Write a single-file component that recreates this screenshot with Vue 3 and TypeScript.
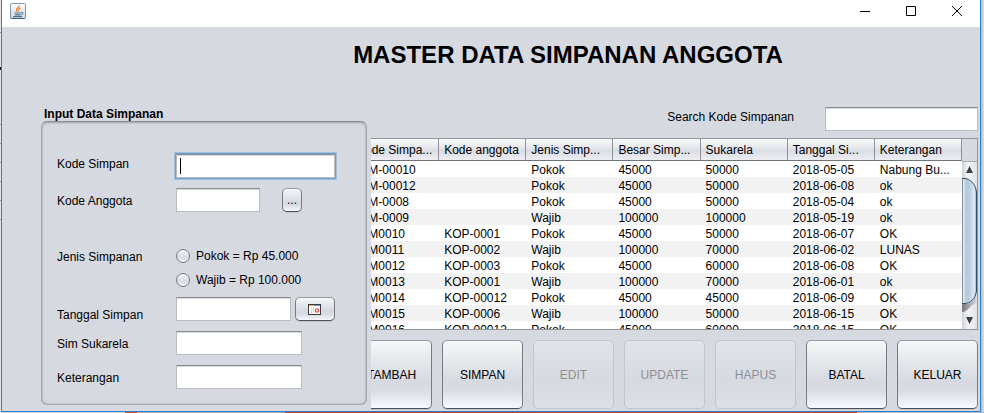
<script setup lang="ts">
import { ref } from 'vue'

interface Simpanan {
  kode: string
  anggota: string
  jenis: string
  besar: string
  sukarela: string
  tanggal: string
  keterangan: string
}

interface Action {
  label: string
  disabled: boolean
}

const columns: string[] = [
  'Kode Simpa...',
  'Kode anggota',
  'Jenis Simp...',
  'Besar Simp...',
  'Sukarela',
  'Tanggal Si...',
  'Keterangan',
]

const row = (
  kode: string,
  anggota: string,
  jenis: string,
  besar: string,
  sukarela: string,
  tanggal: string,
  keterangan: string,
): Simpanan => ({ kode, anggota, jenis, besar, sukarela, tanggal, keterangan })

const rows: Simpanan[] = [
  row('SIM-00010', '', 'Pokok', '45000', '50000', '2018-05-05', 'Nabung Bu...'),
  row('SIM-00012', '', 'Pokok', '45000', '50000', '2018-06-08', 'ok'),
  row('SIM-0008', '', 'Pokok', '45000', '50000', '2018-05-04', 'ok'),
  row('SIM-0009', '', 'Wajib', '100000', '100000', '2018-05-19', 'ok'),
  row('SIM0010', 'KOP-0001', 'Pokok', '45000', '50000', '2018-06-07', 'OK'),
  row('SIM0011', 'KOP-0002', 'Wajib', '100000', '70000', '2018-06-02', 'LUNAS'),
  row('SIM0012', 'KOP-0003', 'Pokok', '45000', '60000', '2018-06-08', 'OK'),
  row('SIM0013', 'KOP-0001', 'Wajib', '100000', '70000', '2018-06-01', 'ok'),
  row('SIM0014', 'KOP-00012', 'Pokok', '45000', '45000', '2018-06-09', 'OK'),
  row('SIM0015', 'KOP-0006', 'Wajib', '100000', '50000', '2018-06-15', 'OK'),
  row('SIM0016', 'KOP-00012', 'Pokok', '45000', '60000', '2018-06-15', 'OK'),
]

const actions: Action[] = [
  { label: 'TAMBAH', disabled: false },
  { label: 'SIMPAN', disabled: false },
  { label: 'EDIT', disabled: true },
  { label: 'UPDATE', disabled: true },
  { label: 'HAPUS', disabled: true },
  { label: 'BATAL', disabled: false },
  { label: 'KELUAR', disabled: false },
]

const kodeSimpan = ref('')
const kodeAnggota = ref('')
const jenis = ref('')
const tanggal = ref('')
const sukarela = ref('')
const keterangan = ref('')
const search = ref('')
</script>

<template>
  <div class="desktop">
    <div class="window">
      <header class="titlebar">
        <svg class="java" viewBox="0 0 16 16" aria-hidden="true">
          <defs>
            <linearGradient id="tile" x1="0" y1="0" x2="0" y2="1">
              <stop offset="0" stop-color="#fdfdfd" />
              <stop offset="1" stop-color="#cfd8e0" />
            </linearGradient>
          </defs>
          <rect x="0.5" y="0.5" width="15" height="15" rx="1" fill="url(#tile)" stroke="#7d93a6" />
          <path d="M1 15.5H15" stroke="#47647c" />
          <path d="M9.5 2.500C9.500 4.500 6 5 6.500 7C6.700 8 7.500 8.300 7.500 9M10.500 5C8.500 6 8.200 7 9 8" fill="none" stroke="#e8822a" stroke-width="1.300" />
          <path d="M4.500 10H11M5 11.800H10.500M3 13.600H12" fill="none" stroke="#4f7595" stroke-width="1.200" />
          <path d="M11 9.500C13.800 8.800 13.800 11.200 11 11.800" fill="none" stroke="#4f7595" />
        </svg>
        <div class="controls">
          <button type="button" aria-label="Minimize">
            <svg viewBox="0 0 10 10"><path d="M0 5.500H10" /></svg>
          </button>
          <button type="button" aria-label="Maximize">
            <svg viewBox="0 0 10 10"><path d="M0.500 0.500H9.500V9.500H0.500Z" /></svg>
          </button>
          <button type="button" aria-label="Close">
            <svg viewBox="0 0 10 10"><path d="M0 0L10 10M10 0L0 10" /></svg>
          </button>
        </div>
      </header>

      <h1>MASTER DATA SIMPANAN ANGGOTA</h1>

      <main class="content">
        <fieldset class="side">
          <legend>Input Data Simpanan</legend>
          <div class="panel">
            <div class="line top">
              <label for="kode-simpan">Kode Simpan</label>
              <div class="focus-box">
                <input id="kode-simpan" v-model="kodeSimpan" type="text" class="field" />
                <span class="caret"></span>
              </div>
            </div>
            <div class="line">
              <label for="kode-anggota">Kode Anggota</label>
              <div class="group wide">
                <input id="kode-anggota" v-model="kodeAnggota" type="text" class="field w-code" />
                <button type="button" class="btn dots">...</button>
              </div>
            </div>
            <div class="line radios" role="radiogroup" aria-labelledby="jenis-label">
              <span id="jenis-label">Jenis Simpanan</span>
              <div class="stack">
                <label><input v-model="jenis" type="radio" name="jenis" value="pokok" />Pokok = Rp 45.000</label>
                <label><input v-model="jenis" type="radio" name="jenis" value="wajib" />Wajib = Rp 100.000</label>
              </div>
            </div>
            <div class="line bottom">
              <label for="tanggal">Tanggal Simpan</label>
              <div class="group">
                <input id="tanggal" v-model="tanggal" type="text" class="field w-date" />
                <button type="button" class="btn calendar" aria-label="Tanggal">
                  <svg viewBox="0 0 14 11">
                    <rect x="0.500" y="0.500" width="12" height="10" fill="#fff" stroke="#3a3a3a" />
                    <path d="M1 1.500H6" stroke="#f0a848" />
                    <path d="M6 1.500H12" stroke="#7d9cc8" />
                    <path d="M3.500 3V10M5.500 3V10" stroke="#dcdcdc" />
                    <circle cx="9" cy="6.500" r="1.700" fill="#fff" stroke="#e05050" stroke-width="1.200" />
                  </svg>
                </button>
              </div>
            </div>
            <div class="line">
              <label for="sukarela">Sim Sukarela</label>
              <input id="sukarela" v-model="sukarela" type="text" class="field w-text" />
            </div>
            <div class="line">
              <label for="keterangan">Keterangan</label>
              <input id="keterangan" v-model="keterangan" type="text" class="field w-text" />
            </div>
          </div>
        </fieldset>

        <section class="data">
          <div class="search">
            <label for="search">Search Kode Simpanan</label>
            <input id="search" v-model="search" type="text" class="field" />
          </div>

          <div class="pane">
            <table>
              <thead>
                <tr>
                  <th v-for="c in columns" :key="c" scope="col">{{ c }}</th>
                </tr>
              </thead>
              <tbody>
                <tr v-for="r in rows" :key="r.kode">
                  <td>{{ r.kode }}</td>
                  <td>{{ r.anggota }}</td>
                  <td>{{ r.jenis }}</td>
                  <td>{{ r.besar }}</td>
                  <td>{{ r.sukarela }}</td>
                  <td>{{ r.tanggal }}</td>
                  <td>{{ r.keterangan }}</td>
                </tr>
              </tbody>
            </table>
            <div class="scroll">
              <div class="corner"></div>
              <svg viewBox="0 0 15 168" aria-hidden="true">
                <defs>
                  <linearGradient id="thumb" x1="0" x2="1" y1="0" y2="0">
                    <stop offset="0" stop-color="#eef5fa" />
                    <stop offset="0.250" stop-color="#b3c9dc" />
                    <stop offset="0.500" stop-color="#b9cfe1" />
                    <stop offset="0.850" stop-color="#dceaf5" />
                    <stop offset="1" stop-color="#8faac2" />
                  </linearGradient>
                  <linearGradient id="arrow" x1="0" x2="1" y1="0" y2="0">
                    <stop offset="0" stop-color="#d2d3d6" />
                    <stop offset="0.400" stop-color="#f4f5f6" />
                    <stop offset="1" stop-color="#e2e3e6" />
                  </linearGradient>
                  <linearGradient id="shade" x1="0" x2="1" y1="0" y2="0">
                    <stop offset="0" stop-color="#77797d" />
                    <stop offset="1" stop-color="#d4d6da" />
                  </linearGradient>
                </defs>
                <rect width="15" height="168" fill="url(#arrow)" />
                <path d="M0 143H5C10 142 13 138 14.500 130V142C9 143 6 151 0 151Z" fill="url(#shade)" />
                <path d="M0 0.500H15" stroke="#a9acb2" />
                <path d="M0.500 17.500H3C8 18 13.500 23 14.500 31V130C13.500 138 8 142.500 3 142.500H0.500Z" fill="url(#thumb)" />
                <path d="M0 17.500H3C8 18 13.500 23 14.500 31V130C13.500 138 8 142.500 3 142.500H0" fill="none" stroke="#2f4c66" />
                <path d="M0.500 18V142" stroke="#8b9096" />
                <path d="M7.500 5L11 12H4Z M7.500 163L11 156H4Z" fill="#3d4043" />
              </svg>
            </div>
          </div>

          <div class="actions">
            <button v-for="a in actions" :key="a.label" type="button" class="btn" :disabled="a.disabled">
              {{ a.label }}
            </button>
          </div>
        </section>
      </main>
    </div>
  </div>
</template>

<style>
body {
  margin: 0;
  background: #d9d9dc;
}
</style>

<style scoped>
* {
  box-sizing: border-box;
}

.desktop {
  padding: 0 3px 1px 1px;
  font: 12px/16px "Liberation Sans", Arial, sans-serif;
  color: #000;
  background:
    linear-gradient(90deg, #d4d4d6 125px, #d8432f 125px 137px, #a9a9ad 137px 285px, #cf3a2c 285px 857px, #b9babd 857px) 0 100% / 100% 1px no-repeat,
    linear-gradient(#111, #111) 0 67px / 1px 3px no-repeat,
    linear-gradient(#999, #999) 0 32px / 1px 1px no-repeat,
    repeating-linear-gradient(#e3e4e7 0 18px, #9a9ca0 18px 19px) 0 106px / 1px 120px no-repeat,
    linear-gradient(90deg, #b9babd, #e0e0e2) 100% 0 / 3px 100% no-repeat,
    #e3e4e7;
}

.window {
  border: solid #2583cf;
  border-width: 0 1px 1px;
  background: #d6d9e0;
}

.titlebar {
  display: flex;
  justify-content: space-between;
  height: 27px;
  padding: 3px 0 0 8px;
  background: #fff;
}

.java {
  width: 16px;
  height: 16px;
}

.controls {
  display: flex;
  margin-top: -3px;
}

.controls button {
  width: 46px;
  height: 22px;
  padding: 0;
  border: 0;
  background: none;
}

.controls svg {
  display: block;
  width: 10px;
  height: 10px;
  margin: 0 auto;
  overflow: visible;
}

.controls path {
  fill: none;
  stroke: #000;
}

h1 {
  margin: 0;
  padding: 14px 0 38px 154px;
  font-size: 24px;
  line-height: 28px;
  text-align: center;
}

.content {
  display: flex;
  padding: 0 2px 2px 0;
}

/* The form lies over the first pixels of the table and of the button bar. */
.side {
  position: relative;
  z-index: 1;
  flex: none;
  width: 369px;
  min-width: 0;
  margin: 0 -20px -2px 0;
  padding: 0 4px 0 39px;
  border: 0;
  background: #d6d9e0;
}

legend {
  height: 14px;
  padding: 0 3px;
  font-weight: bold;
  line-height: 14px;
}

.panel {
  display: flex;
  flex-direction: column;
  gap: 10px;
  padding: 32px 14px 15px 15px;
  border: 1px solid #a2a5ab;
  border-top-color: #898c91;
  border-radius: 6px;
  box-shadow: inset 0 1px 2px #a6a9af, inset 0 0 3px #b4b7bd;
}

.line {
  display: grid;
  grid-template-columns: 119px auto;
  justify-content: start;
  align-items: center;
}

.line > label {
  padding-top: 2px;
}

.top,
.radios {
  align-items: start;
}

.bottom {
  align-items: end;
  line-height: 12px;
}

.radios {
  margin-top: 27px;
}

.stack {
  display: flex;
  flex-direction: column;
  gap: 10px;
}

.stack label {
  display: flex;
  align-items: center;
  gap: 6px;
  height: 14px;
}

input[type='radio'] {
  width: 14px;
  height: 14px;
  margin: 0;
  appearance: none;
  border: 1px solid #75797e;
  border-radius: 50%;
  background: linear-gradient(#f7f8fa, #d9dce2 60%, #f4f6fa);
}

.group {
  display: flex;
  gap: 4px;
}

.wide {
  gap: 22px;
}

.field {
  display: block;
  height: 24px;
  padding: 2px 4px;
  border: 1px solid #b9bbc0;
  border-top-color: #8b8c8f;
  border-radius: 0;
  outline: 0;
  background: #fff;
  box-shadow: inset 0 1px #d8d9db;
  font: inherit;
}

.focus-box {
  position: relative;
  width: 159px;
}

.focus-box .field {
  width: 100%;
  box-shadow: inset 0 1px #d8d9db, 0 0 0 1px #72a0cb, 0 0 0 2px #9fbfde;
  caret-color: transparent;
}

.caret {
  position: absolute;
  top: 4px;
  left: 4px;
  width: 1px;
  height: 16px;
  background: #000;
}

.w-code {
  width: 84px;
}

.w-date {
  width: 115px;
}

.w-text {
  width: 126px;
}

.btn {
  padding: 0;
  border: 1px solid #777b81;
  border-top-color: #999ca2;
  border-bottom-color: #4c5056;
  border-radius: 5px;
  background: linear-gradient(#f6f7f9, #e2e5e9 35%, #d6d9e0 60%, #d9dde5 75%, #f7faff);
  box-shadow: 0 1px #c3c6cc;
  font: inherit;
  color: #000;
}

.btn:disabled {
  border-color: #c2c5ca;
  background: linear-gradient(#e0e3e8, #d6d9e0 60%, #dcdfe6);
  box-shadow: none;
  color: #8e8f93;
}

.dots {
  width: 20px;
  height: 24px;
}

.calendar {
  width: 40px;
  height: 24px;
}

.calendar svg {
  display: block;
  width: 14px;
  height: 11px;
  margin: 0 auto;
}

.data {
  display: flex;
  flex: 1;
  flex-direction: column;
  min-width: 0;
}

.search {
  display: flex;
  justify-content: flex-end;
  gap: 31px;
  margin-bottom: 7px;
}

.search label {
  padding-top: 2px;
}

.search .field {
  width: 153px;
}

.pane {
  display: flex;
  align-items: flex-start;
  height: 192px;
  overflow: hidden;
  border: 1px solid #93969d;
  background: #fff;
}

table {
  flex: 1;
  width: 0;
  table-layout: fixed;
  border-collapse: separate;
  border-spacing: 0;
}

th,
td {
  padding: 0 0 0 5px;
  overflow: hidden;
  font-weight: normal;
  text-align: left;
  white-space: nowrap;
}

th {
  height: 22px;
  border-right: 1px solid #8f9299;
  border-bottom: 1px solid #6f737a;
  background: linear-gradient(#fafbfc, #e3e5ea 45%, #d9dce2 55%, #eceef2);
}

td {
  height: 16px;
  padding-top: 2px;
  line-height: 14px;
}

tbody tr:nth-child(even) {
  background: #f2f2f2;
}

.scroll {
  flex: none;
  width: 15px;
}

.corner {
  height: 22px;
  background: #d6d9e0;
}

.scroll svg {
  display: block;
  width: 15px;
  height: 168px;
}

.actions {
  display: grid;
  grid-template-columns: repeat(7, 1fr);
  gap: 10px;
  margin-top: 10px;
}

.actions .btn {
  height: 69px;
}
</style>
